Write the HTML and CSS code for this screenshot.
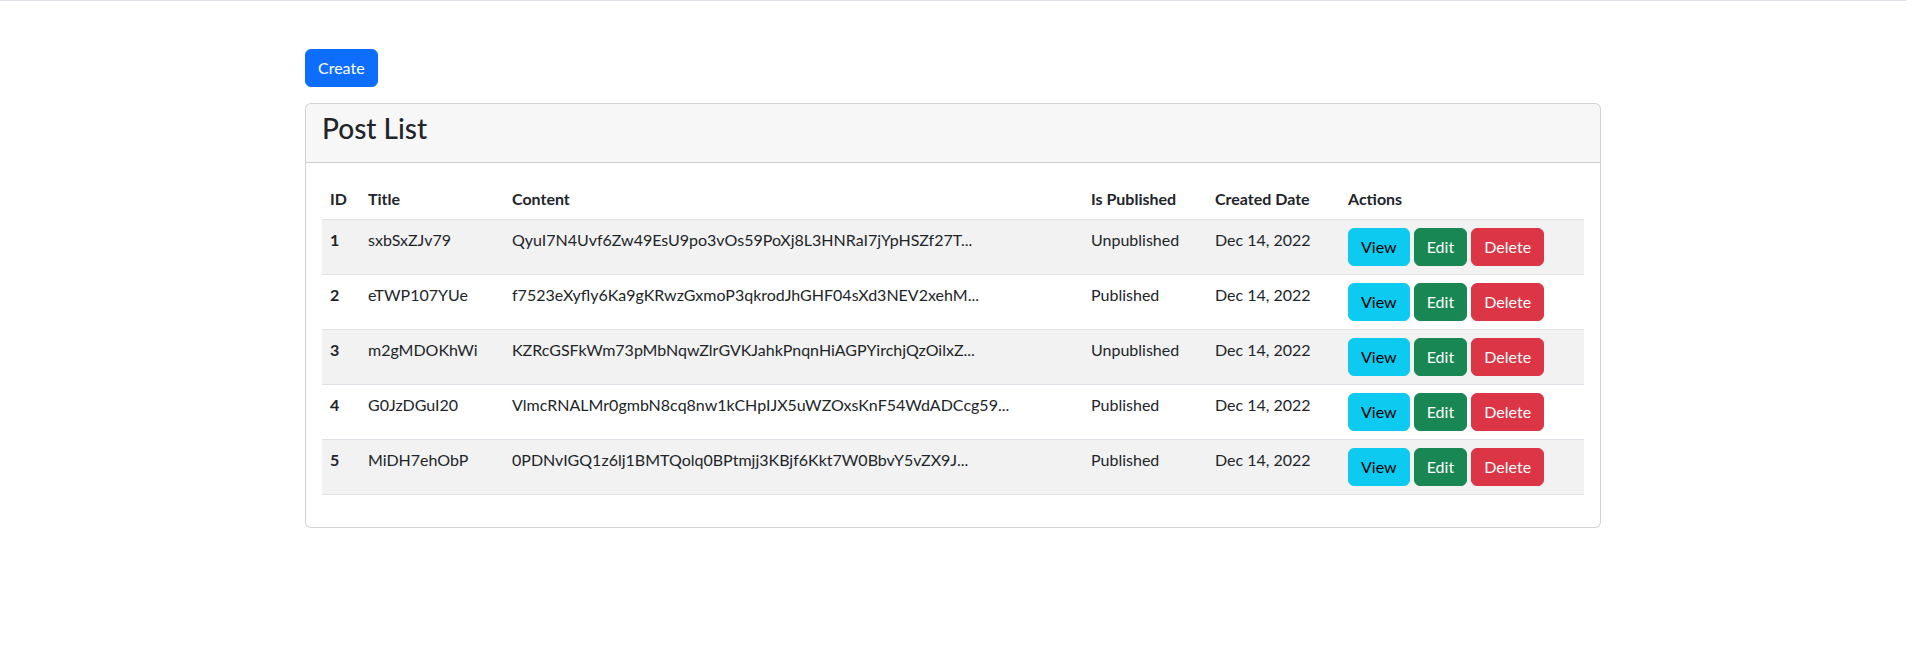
FILE: index.html
```html
<!DOCTYPE html>
<html lang="en">
<head>
<meta charset="utf-8">
<title>Post List</title>
<link rel="stylesheet" href="styles.css">
</head>
<body>
<div class="topbar"></div>
<main class="container">
  <a class="btn btn-primary create" href="#">Create</a>
  <div class="card">
    <div class="card-header"><h3>Post List</h3></div>
    <div class="card-body">
      <table class="table">
        <colgroup>
          <col class="c-id"><col class="c-title"><col class="c-content"><col class="c-pub"><col class="c-date"><col class="c-act">
        </colgroup>
        <thead>
          <tr><th>ID</th><th>Title</th><th>Content</th><th>Is Published</th><th>Created Date</th><th>Actions</th></tr>
        </thead>
        <tbody>
          <tr class="odd">
            <th>1</th><td>sxbSxZJv79</td><td>QyuI7N4Uvf6Zw49EsU9po3vOs59PoXj8L3HNRaI7jYpHSZf27T...</td><td>Unpublished</td><td>Dec 14, 2022</td>
            <td><a class="btn btn-info" href="#">View</a> <a class="btn btn-success" href="#">Edit</a> <a class="btn btn-danger" href="#">Delete</a></td>
          </tr>
          <tr>
            <th>2</th><td>eTWP107YUe</td><td>f7523eXyfly6Ka9gKRwzGxmoP3qkrodJhGHF04sXd3NEV2xehM...</td><td>Published</td><td>Dec 14, 2022</td>
            <td><a class="btn btn-info" href="#">View</a> <a class="btn btn-success" href="#">Edit</a> <a class="btn btn-danger" href="#">Delete</a></td>
          </tr>
          <tr class="odd">
            <th>3</th><td>m2gMDOKhWi</td><td>KZRcGSFkWm73pMbNqwZlrGVKJahkPnqnHiAGPYirchjQzOilxZ...</td><td>Unpublished</td><td>Dec 14, 2022</td>
            <td><a class="btn btn-info" href="#">View</a> <a class="btn btn-success" href="#">Edit</a> <a class="btn btn-danger" href="#">Delete</a></td>
          </tr>
          <tr>
            <th>4</th><td>G0JzDGuI20</td><td>VlmcRNALMr0gmbN8cq8nw1kCHpIJX5uWZOxsKnF54WdADCcg59...</td><td>Published</td><td>Dec 14, 2022</td>
            <td><a class="btn btn-info" href="#">View</a> <a class="btn btn-success" href="#">Edit</a> <a class="btn btn-danger" href="#">Delete</a></td>
          </tr>
          <tr class="odd">
            <th>5</th><td>MiDH7ehObP</td><td>0PDNvIGQ1z6lj1BMTQolq0BPtmjj3KBjf6Kkt7W0BbvY5vZX9J...</td><td>Published</td><td>Dec 14, 2022</td>
            <td><a class="btn btn-info" href="#">View</a> <a class="btn btn-success" href="#">Edit</a> <a class="btn btn-danger" href="#">Delete</a></td>
          </tr>
        </tbody>
      </table>
    </div>
  </div>
</main>
</body>
</html>
```
FILE: styles.css
```css
* { box-sizing: border-box; }

html, body {
  margin: 0;
  background: #fff;
}

body {
  padding-right: 6px;
  font-family: "Lato", "Liberation Sans", sans-serif;
  font-size: 16px;
  line-height: 1.5;
  color: #212529;
}

.topbar {
  border-bottom: 1px solid #dee2e6;
}

.container {
  display: block;
  max-width: 1320px;
  margin: 48px auto 0;
  padding: 0 12px;
}

.btn {
  display: inline-block;
  padding: 6px 12px;
  font-size: 16px;
  line-height: 24px;
  font-weight: 400;
  text-decoration: none;
  border: 1px solid transparent;
  border-radius: 6px;
  vertical-align: middle;
  color: #fff;
}

.btn-primary { background: #0d6efd; border-color: #0d6efd; }
.btn-info { background: #0dcaf0; border-color: #0dcaf0; color: #000; }
.btn-success { background: #198754; border-color: #198754; }
.btn-danger { background: #dc3545; border-color: #dc3545; }

.create { margin-bottom: 16px; }

.card {
  border: 1px solid rgba(0, 0, 0, 0.175);
  border-radius: 6px;
  background: #fff;
  overflow: hidden;
}

.card-header {
  padding: 8px 16px;
  background: rgba(0, 0, 0, 0.03);
  border-bottom: 1px solid rgba(0, 0, 0, 0.175);
}

.card-header h3 {
  margin: 0 0 8px;
  font-size: 28px;
  font-weight: 500;
  line-height: 1.2;
}

.card-body {
  padding: 16px;
}

.table {
  width: 100%;
  margin-bottom: 16px;
  border-collapse: collapse;
  table-layout: fixed;
}

.c-id { width: 38px; }
.c-title { width: 144px; }
.c-content { width: 579px; }
.c-pub { width: 124px; }
.c-date { width: 133px; }
.c-act { width: auto; }

.table th,
.table td {
  padding: 8px;
  text-align: left;
  vertical-align: top;
  border-bottom: 1px solid #dee2e6;
  white-space: nowrap;
  overflow: hidden;
}

.table thead th {
  vertical-align: bottom;
  font-weight: 700;
}

.table tbody th {
  font-weight: 700;
}

.table tbody tr.odd > * {
  background: #f2f2f2;
}
```
